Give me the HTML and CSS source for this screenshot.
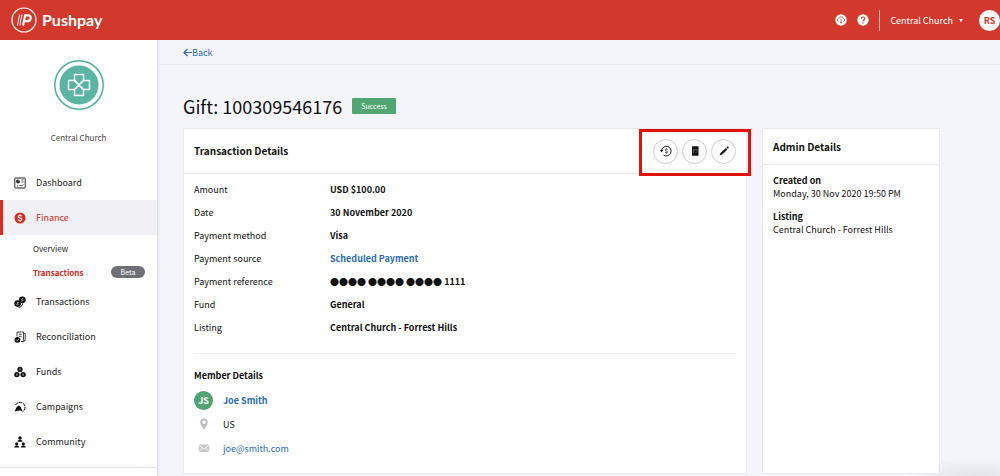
FILE: index.html
```html
<!DOCTYPE html>
<html lang="en">
<head>
<meta charset="utf-8">
<meta name="viewport" content="width=device-width, initial-scale=1">
<title>Gift: 100309546176 - Pushpay</title>
<link rel="stylesheet" href="styles.css">
</head>
<body>
<header class="topbar">
  <a class="brand" href="#">
    <svg class="brand-mark" viewBox="0 0 26 26" fill="none" stroke="#fff" aria-hidden="true">
      <circle cx="13" cy="13" r="12" stroke-width="1.2"/>
      <path d="M8.600 7.500 6.400 18.500M11 7.500 8.800 18.500" stroke-width="1"/>
      <path d="M12 18.500 14.200 8.300H17.200C21 8.300 20.300 14.200 16.200 14.200H13.200" stroke-width="2.200"/>
    </svg>
    <span class="brand-name">Pushpay</span>
  </a>
  <div class="topbar-tools">
    <button class="round-tool" type="button" aria-label="Downloads">
      <svg viewBox="0 0 12 12" fill="none" aria-hidden="true">
        <circle cx="6" cy="6" r="5.700" fill="#fff"/>
        <path d="M3.600 7.800C1.800 7 2 4.800 3.600 4.500 4 2.300 8 2.300 8.400 4.500 10 4.800 10.200 7 8.400 7.800M6 5V9M4.900 8 6 9.200 7.100 8" stroke="#d2392c" stroke-width=".8"/>
      </svg>
    </button>
    <button class="round-tool" type="button" aria-label="Help">
      <svg viewBox="0 0 12 12" fill="none" aria-hidden="true">
        <circle cx="6" cy="6" r="5.700" fill="#fff"/>
        <path d="M4.300 4.700C4.300 2.500 7.800 2.500 7.800 4.500 7.800 5.800 6 5.600 6 7.200M6 8.200V9.400" stroke="#d2392c" stroke-width="1.200"/>
      </svg>
    </button>
    <button class="org-switch" type="button">Central Church <span class="caret"></span></button>
    <button class="user" type="button">RS</button>
  </div>
</header>
<div class="layout">
  <aside class="sidebar">
    <div class="org">
      <svg class="org-logo" viewBox="0 0 50 50" fill="none" aria-hidden="true">
        <circle cx="25" cy="25" r="24.200" stroke="#52b09d" stroke-width="1.500"/>
        <circle cx="25" cy="25" r="19.500" fill="#5ab5a4"/>
        <path d="M20.500 14.500h9v5.500l-4.500 5-4.500-5zM20.500 35.500h9v-5.500l-4.500-5-4.500 5zM14.500 20.500v9h5.500l5-4.500-5-4.500zM35.500 20.500v9h-5.500l-5-4.500 5-4.500z" stroke="#fff" stroke-width="1.400" stroke-linejoin="round"/>
      </svg>
      <p class="org-name">Central Church</p>
    </div>
    <nav aria-label="Main">
      <ul class="nav">
        <li><a class="nav-link" href="#">
          <svg class="nav-icon" viewBox="0 0 12 12" fill="none" stroke="#222" aria-hidden="true"><rect x=".8" y="1" width="10.400" height="10" rx=".5"/><circle cx="4" cy="4.500" r="1.900" fill="#222" stroke="none"/><path d="M4 4.500 5.500 2.500" stroke="#fff" stroke-width=".6"/><path d="M7.500 3h2M7.500 5h2M3 9h1M5.500 9 6.500 8 7.500 9 9.500 7.500" stroke-width=".8"/></svg>
          Dashboard</a></li>
        <li><a class="nav-link active" href="#" aria-current="true">
          <svg class="nav-icon" viewBox="0 0 12 12" fill="none" aria-hidden="true"><circle cx="6" cy="6" r="5.500" fill="#d62d20"/><path d="M7.900 4.400C7.400 3 4.200 3.200 4.200 4.700 4.200 6.300 7.800 5.500 7.800 7.300 7.800 8.900 4.500 8.900 4 7.500M6 2.200v1.200M6 8.500v1.300" stroke="#fff" stroke-width="1.100"/></svg>
          Finance</a>
          <ul class="subnav">
            <li><a class="sub-link" href="#">Overview</a></li>
            <li><a class="sub-link current" href="#" aria-current="page">Transactions <span class="beta">Beta</span></a></li>
          </ul>
        </li>
        <li><a class="nav-link" href="#">
          <svg class="nav-icon" viewBox="0 0 12 12" fill="none" aria-hidden="true"><circle cx="3.600" cy="7.600" r="3.300" fill="#111"/><circle cx="8.300" cy="3.800" r="3.400" fill="#111"/><path d="M4.700 6.600C3.500 5.800 2.500 6.800 3.600 7.600s0 1.800-1.200 1M9.400 2.800C8.200 2 7.200 3 8.300 3.800s0 1.800-1.200 1" stroke="#fff" stroke-width=".7"/><path d="M4.500 11.300C7 11.300 8.200 10 8.500 7.500" stroke="#111"/></svg>
          Transactions</a></li>
        <li><a class="nav-link" href="#">
          <svg class="nav-icon" viewBox="0 0 12 12" fill="none" stroke="#333" aria-hidden="true"><path d="M3 5.500V1h6.500v8.500H11.200V2.500H9.500M7 10.500h3.500M5 3.300h2.800M5 5.300h2.800" stroke-width=".9"/><circle cx="3.500" cy="8.800" r="2.900" fill="#111" stroke="none"/><path d="M2.200 8.800l1 1L5 7.900" stroke="#fff" stroke-width=".7"/></svg>
          Reconciliation</a></li>
        <li><a class="nav-link" href="#">
          <svg class="nav-icon" viewBox="0 0 12 12" fill="none" aria-hidden="true"><circle cx="6" cy="3.400" r="2.600" fill="#111"/><circle cx="2.900" cy="8.600" r="2.700" fill="#111"/><circle cx="9.100" cy="8.600" r="2.700" fill="#111"/><path d="M6 2.400v2M2.900 7.600v2M9.100 7.600v2" stroke="#fff" stroke-width=".7"/></svg>
          Funds</a></li>
        <li><a class="nav-link" href="#">
          <svg class="nav-icon" viewBox="0 0 12 12" fill="none" stroke="#111" aria-hidden="true"><path d="M1.500 4C3.500 0 10.500.5 11 6c.1 2-1 4-2.500 4.800" stroke-dasharray="3.500 .7"/><path d="M.6 10.200 2.400 6.500 4.300 4.500 6.500 5.500 8.600 10.500 6 9.500z" fill="#111" stroke="none"/></svg>
          Campaigns</a></li>
        <li><a class="nav-link" href="#">
          <svg class="nav-icon" viewBox="0 0 12 12" fill="#111" aria-hidden="true"><circle cx="6" cy="2" r="1.700"/><path d="M3.500 5.800C3.500 3.200 8.500 3.200 8.500 5.800zM.2 11.600C.2 8.800 5.300 8.800 5.300 11.600zM6.700 11.600C6.700 8.800 11.800 8.800 11.800 11.600z"/><circle cx="2.700" cy="7.900" r="1.600"/><circle cx="9.300" cy="7.900" r="1.600"/></svg>
          Community</a></li>
      </ul>
    </nav>
  </aside>
  <main class="content">
    <div class="crumbs">
      <a class="back" href="#"><svg viewBox="0 0 9 9" fill="none" stroke="#2a6db4" stroke-width="1.200" aria-hidden="true"><path d="M9 4.500H1M4.500 1 1 4.500 4.500 8"/></svg>Back</a>
    </div>
    <div class="page">
      <div class="title-row"><h1>Gift: 100309546176</h1><span class="status">Success</span></div>
      <div class="cards">
        <section class="card transaction">
          <div class="card-head tall">
            <h2>Transaction Details</h2>
            <div class="actions">
              <button type="button" aria-label="Refund"><svg viewBox="0 0 12 12" fill="none" stroke="#222" aria-hidden="true"><path d="M1.500 6A4.800 4.800 0 1 1 3.500 10" /><path d="M0 5h3.400L1.700 7.300z" fill="#111" stroke="none"/><path d="M7.600 4.700C7.200 3.800 5.200 4 5.200 5.100S7.700 5.900 7.700 7 5.400 8 5 7.200M6.400 3.300v.8M6.400 7.800v.8" stroke-width=".8"/></svg></button>
              <button type="button" aria-label="Receipt"><svg viewBox="0 0 12 12" fill="none" aria-hidden="true"><path d="M3 1.300h6.500v9.400H3z" fill="#111"/><path d="M4.600 4v4M5.800 4.200v1.600M7 4v1M7 6.700v1.300M8.100 4v2.500" stroke="#999" stroke-width=".6"/></svg></button>
              <button type="button" aria-label="Edit"><svg viewBox="0 0 12 12" fill="#111" aria-hidden="true"><path d="M1.700 10.500 2.500 8 7.900 2.900 9.400 4.400 4.100 9.500zM8.400 2.400 9.100 1.700C9.900 1 11.200 2.200 10.500 3.200L9.900 3.900z"/></svg></button>
            </div>
          </div>
          <div class="card-body">
            <dl class="facts">
              <dt>Amount</dt><dd>USD $100.00</dd>
              <dt>Date</dt><dd>30 November 2020</dd>
              <dt>Payment method</dt><dd>Visa</dd>
              <dt>Payment source</dt><dd><a href="#">Scheduled Payment</a></dd>
              <dt>Payment reference</dt><dd>●●●● ●●●● ●●●● 1111</dd>
              <dt>Fund</dt><dd>General</dd>
              <dt>Listing</dt><dd>Central Church - Forrest Hills</dd>
            </dl>
            <section class="member">
              <h3>Member Details</h3>
              <ul class="member-list">
                <li><span class="initials">JS</span><a class="strong" href="#">Joe Smith</a></li>
                <li><svg viewBox="0 0 12 12" aria-hidden="true"><path d="M6 .5C1.500.5 1.600 5 3.300 7.500L6 11.500 8.700 7.500C10.400 5 10.500.5 6 .5zM6 2.600A1.700 1.700 0 1 1 6 6 1.700 1.700 0 0 1 6 2.600z" fill="#bcbfc6"/></svg>US</li>
                <li><svg viewBox="0 0 12 12" fill="none" aria-hidden="true"><rect x=".7" y="2.400" width="10.600" height="7.600" rx="1" fill="#c6c8ce"/><path d="M1 3.300 6 7l5-3.700M1 9.200l3.300-3M11 9.200l-3.300-3" stroke="#fff" stroke-width=".8"/></svg><a href="#">joe@smith.com</a></li>
              </ul>
            </section>
          </div>
        </section>
        <section class="card admin">
          <div class="card-head"><h2>Admin Details</h2></div>
          <dl class="admin-facts">
            <dt>Created on</dt><dd>Monday, 30 Nov 2020 19:50 PM</dd>
            <dt>Listing</dt><dd>Central Church - Forrest Hills</dd>
          </dl>
        </section>
      </div>
    </div>
  </main>
</div>
</body>
</html>
```

FILE: styles.css
```css
*, *::after { box-sizing: border-box; }
body, h1, h2, h3, p, ul, dl, dd { margin: 0; padding: 0; }
ul { list-style: none; }
body {
  display: flex;
  flex-direction: column;
  min-height: 100vh;
  background: #f4f5fa;
  color: #111;
  font-family: "Noto Sans CJK SC", "Open Sans", sans-serif;
  font-size: 9px;
  line-height: 13px;
}
button { padding: 0; border: 0; background: none; font: inherit; cursor: pointer; }
a { color: #2a6db4; text-decoration: none; }
svg { display: block; flex: none; }

.topbar {
  position: relative;
  z-index: 1;
  display: flex;
  align-items: center;
  justify-content: space-between;
  height: 40px;
  padding-left: 11px;
  background: #d2392c;
}
.brand { display: flex; align-items: center; gap: 5px; color: #fff; }
.brand-mark { width: 26px; height: 26px; }
.brand-name { font-family: Lato, sans-serif; font-size: 16px; font-weight: 700; line-height: 20px; }
.topbar-tools { display: flex; align-items: center; }
.round-tool { margin-right: 10px; }
.round-tool svg { width: 12px; height: 12px; }
.org-switch {
  display: flex;
  align-items: center;
  gap: 6px;
  height: 21px;
  padding: 0 16px 0 10px;
  border-left: 1px solid #efb5af;
  color: #fff;
}
.caret { border: 2px solid transparent; border-top: 3px solid #fff; border-bottom: 0; }
.user { width: 21px; height: 21px; border-radius: 50%; background: #fff; color: #d2392c; font-weight: 700; }

.layout { display: flex; flex: 1; }
.sidebar {
  flex: none;
  width: 158px;
  border-right: 1px solid #dcdfea;
  background: #fff;
  box-shadow: 0 0 3px #dcdfea;
}
.org { display: flex; flex-direction: column; align-items: center; gap: 21px; padding: 20px 0 21px; }
.org-logo { width: 50px; height: 50px; }
.org-name { color: #444; font-size: 8px; }
.nav { padding-bottom: 8px; border-bottom: 1px solid #e6e7ec; }
.nav-link {
  display: flex;
  align-items: center;
  gap: 10px;
  height: 35px;
  padding-left: 11px;
  border-left: 3px solid transparent;
  color: #222;
}
.nav-icon { width: 12px; height: 12px; }
.nav-link.active { border-color: #d62d20; background: #f0f0f5; color: #d62d20; }
.subnav { padding-top: 1px; }
.sub-link { display: flex; align-items: center; justify-content: space-between; height: 24px; padding: 0 12px 0 33px; color: #222; font-size: 8px; }
.sub-link.current { color: #d62d20; font-weight: 700; }
.beta { width: 34px; border-radius: 6px; background: #6f7074; color: #fff; font-size: 7px; font-weight: 400; line-height: 12px; text-align: center; }

.content {
  flex: 1;
  min-width: 0;
  background: radial-gradient(ellipse 70px 18px at right 24px bottom 0, #e3e4e9, transparent);
}
.crumbs { display: flex; align-items: center; height: 25px; padding-left: 25px; border-bottom: 1px solid #e6e8ef; }
.back { display: flex; align-items: center; }
.back svg { width: 9px; height: 9px; }
.page { padding: 31px 60px 2px 25px; }
.title-row { display: flex; align-items: center; gap: 10px; height: 20px; margin-bottom: 12px; }
h1 { font-size: 18px; font-weight: 400; line-height: 20px; }
.status { padding: 0 9px; border-radius: 1px; background: #51a671; color: #fff; font-size: 7px; line-height: 16px; }
.cards { display: flex; gap: 15px; }
.card { border: 1px solid #e9eaef; background: #fff; }
.transaction { flex: 1; min-width: 0; }
.admin { width: 178px; }
.card-head { position: relative; display: flex; align-items: center; justify-content: space-between; height: 36px; padding: 0 10px; border-bottom: 1px solid #e9eaef; }
.card-head.tall { height: 45px; }
h2 { font-size: 10px; font-weight: 700; line-height: 12px; }
.actions { display: flex; gap: 4px; }
.actions::after {
  content: "";
  position: absolute;
  top: 0;
  right: -5px;
  width: 112px;
  height: 47px;
  border: 3px solid #e2100b;
  pointer-events: none;
}
.actions button { display: grid; place-items: center; width: 25px; height: 25px; border: 1px solid #cfd0d4; border-radius: 50%; }
.actions svg { width: 12px; height: 12px; }
.card-body { padding: 4px 10px 13px; }
.facts { display: grid; grid-template-columns: 136px 1fr; line-height: 23px; padding-bottom: 14px; border-bottom: 1px solid #eff0f3; }
.facts dd { font-weight: 700; }
.member { padding-top: 15px; }
h3 { font-size: 9px; font-weight: 700; }
.member-list { padding-top: 6px; }
.member-list li { display: flex; align-items: center; height: 24px; }
.member-list svg { width: 12px; height: 12px; margin: 0 13px 0 4px; }
.initials { width: 19px; margin-right: 10px; border-radius: 50%; background: #4fa46f; color: #fff; font-weight: 700; line-height: 19px; text-align: center; }
.strong { font-weight: 700; }
.admin-facts { padding: 9px 10px; }
.admin-facts dt { font-weight: 700; }
.admin-facts dd + dt { margin-top: 10px; }
```
